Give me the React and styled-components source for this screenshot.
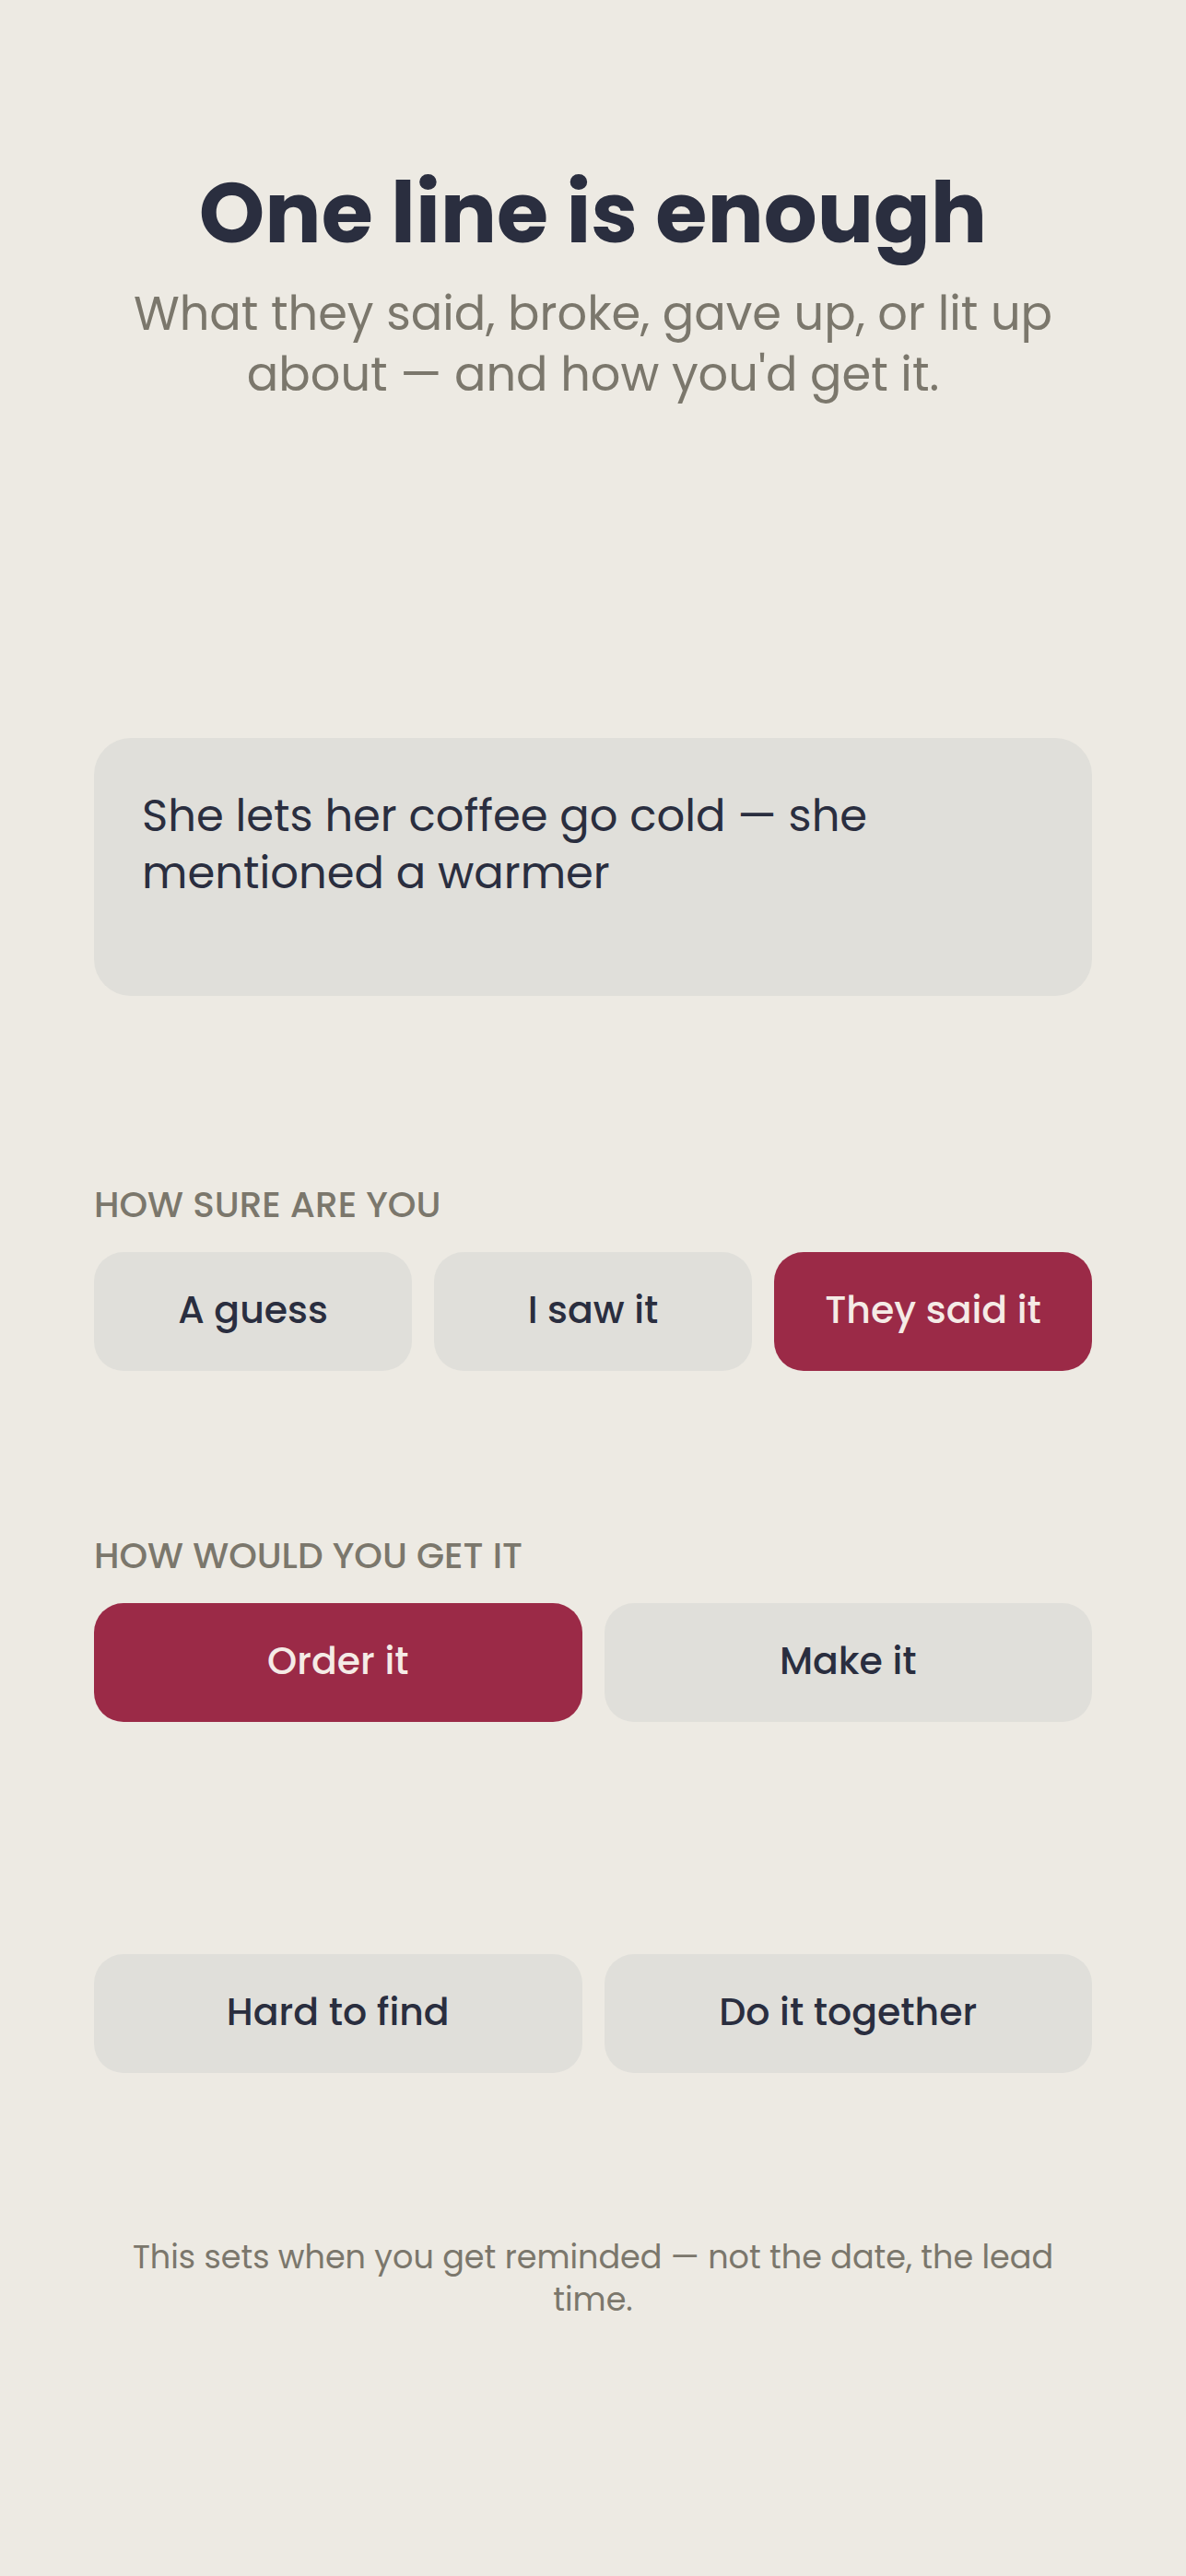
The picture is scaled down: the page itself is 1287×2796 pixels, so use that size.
import React, { useState } from "react";
import styled, { createGlobalStyle } from "styled-components";

const sureOptions = ["A guess", "I saw it", "They said it"];
const getOptions = ["Order it", "Make it", "Hard to find", "Do it together"];

const App = () => {
  const [note, setNote] = useState(
    "She lets her coffee go cold — she mentioned a warmer"
  );
  const [sure, setSure] = useState("They said it");
  const [get, setGet] = useState("Order it");

  return (
    <Page>
      <GlobalStyle />
      <Header>
        <Title>One line is enough</Title>
        <Subtitle>
          What they said, broke, gave up, or lit up about — and how you'd get
          it.
        </Subtitle>
      </Header>

      <Note
        aria-label="Your line"
        value={note}
        onChange={(e) => setNote(e.target.value)}
      />

      <Groups>
        <Group role="group" aria-labelledby="sure-label">
          <Label id="sure-label">HOW SURE ARE YOU</Label>
          <Options $columns={3}>
            {sureOptions.map((option) => (
              <Option
                key={option}
                type="button"
                aria-pressed={option === sure}
                $selected={option === sure}
                onClick={() => setSure(option)}
              >
                {option}
              </Option>
            ))}
          </Options>
        </Group>

        <Group role="group" aria-labelledby="get-label">
          <Label id="get-label">HOW WOULD YOU GET IT</Label>
          <Options $columns={2}>
            {getOptions.map((option) => (
              <Option
                key={option}
                type="button"
                aria-pressed={option === get}
                $selected={option === get}
                onClick={() => setGet(option)}
              >
                {option}
              </Option>
            ))}
          </Options>
        </Group>

        <Hint>
          This sets when you get reminded — not the date, the lead time.
        </Hint>
      </Groups>
    </Page>
  );
};

const GlobalStyle = createGlobalStyle`
  * {
    box-sizing: border-box;
  }

  body {
    margin: 0;
    background-color: #edeae3;
    color: #2a2e3f;
    font-family: Poppins, Inter, sans-serif;
  }
`;

const Page = styled.main`
  display: flex;
  flex-direction: column;
  min-height: 100vh;
  padding: 181px 102px;
`;

const Header = styled.header`
  display: flex;
  flex-direction: column;
  gap: 26px;
  text-align: center;
`;

const Title = styled.h1`
  margin: 0;
  font-size: 91px;
  font-weight: 700;
  line-height: 100px;
`;

const Subtitle = styled.p`
  margin: 0;
  padding: 0 24px;
  color: #7b776c;
  font-size: 51px;
  line-height: 66px;
`;

const Note = styled.textarea`
  display: block;
  width: 100%;
  height: 280px;
  margin-top: 362px;
  padding: 54px 52px;
  border: none;
  border-radius: 40px;
  outline: none;
  resize: none;
  background-color: #e0dfda;
  color: #2a2e3f;
  font-family: inherit;
  font-size: 48px;
  line-height: 62px;
`;

const Groups = styled.div`
  display: flex;
  flex-direction: column;
  gap: 177px;
  margin-top: 203px;
`;

const Group = styled.section`
  display: flex;
  flex-direction: column;
  gap: 27px;
`;

const Label = styled.h2`
  margin: 0;
  color: #7b776c;
  font-size: 39px;
  font-weight: 500;
  line-height: 48px;
`;

const Options = styled.div`
  display: grid;
  grid-template-columns: repeat(${(props) => props.$columns}, 1fr);
  gap: 252px 24px;
`;

const Option = styled.button`
  padding: 34px 16px 38px;
  border: none;
  border-radius: 32px;
  background-color: ${(props) => (props.$selected ? "#9b2a47" : "#e0dfda")};
  color: ${(props) => (props.$selected ? "#f5ebe6" : "#2a2e3f")};
  font-family: inherit;
  font-size: 41px;
  font-weight: 500;
  line-height: 57px;
  cursor: pointer;
`;

const Hint = styled.p`
  margin: 0;
  padding: 0 24px;
  color: #7b776c;
  font-size: 35px;
  line-height: 46px;
  text-align: center;
`;

export default App;
